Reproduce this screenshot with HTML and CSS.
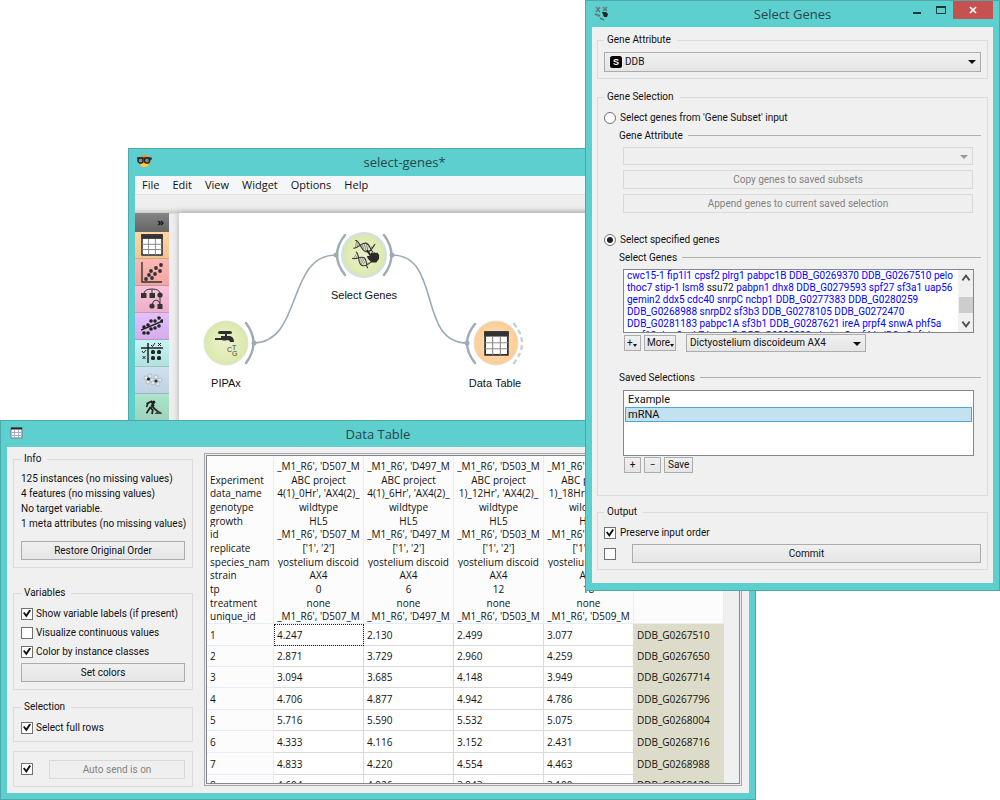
FILE: index.html
```html
<!DOCTYPE html>
<html lang="en">
<head>
<meta charset="utf-8">
<title>Select Genes</title>
<link rel="stylesheet" href="styles.css">
</head>
<body>
<svg class="defs" width="0" height="0" aria-hidden="true">
  <defs>
    <symbol id="grid-icon" viewBox="0 0 22 22">
      <rect x="1" y="1" width="20" height="20" fill="#fff" stroke="#333" stroke-width="1.6"/>
      <rect x="0.3" y="0.3" width="21.4" height="4.6" fill="#333"/>
      <path d="M7.6 5v16M14.4 5v16M1 10.3h20M1 15.6h20" stroke="#8a8a8a" stroke-width="1" fill="none"/>
    </symbol>
    <symbol id="dna" viewBox="0 0 24 12">
      <path d="M1 1C7 1 9 11 15 11S21 4 23 1M1 10C6 10 8 2 13 2S19 9 23 10" fill="none" stroke="#333" stroke-width="1.2"/>
      <path d="M3 2v7M5 3.500v4M10 4v4M12 3v6M14 3v7M16 4v6M20 4v4" stroke="#666" stroke-width="0.7"/>
    </symbol>
    <symbol id="genes-icon" viewBox="0 0 30 32">
      <use href="#dna" x="1" y="1" width="24" height="12" transform="rotate(12 13 7)"/>
      <use href="#dna" x="-1" y="16" width="22" height="11" transform="rotate(32 10 22)"/>
      <path d="M15 11l2-1 3 5 1-2 2 1 1-1 2 1 1-1 2 3 0 4-3 4h-5l-4-4-1-3 3 0z" fill="#2b2b2b"/>
    </symbol>
  </defs>
</svg>
<main class="desktop">

  <section class="window workflow" aria-label="select-genes">
    <header class="titlebar">
      <svg class="title-icon" viewBox="0 0 16 16" aria-hidden="true">
        <circle cx="8.500" cy="8" r="6" fill="#f5941e"/>
        <ellipse cx="8.500" cy="12" rx="4" ry="1.800" fill="#ffd24a"/>
        <path d="M1 5h14M14 7l2-2" stroke="#333" stroke-width="1.400"/>
        <circle cx="4.500" cy="7.500" r="2.600" fill="#7d8b92" stroke="#222" stroke-width="1.300"/>
        <circle cx="11" cy="7.500" r="2.600" fill="#7d8b92" stroke="#222" stroke-width="1.300"/>
      </svg>
      <h1 class="title">select-genes*</h1>
    </header>
    <div class="client">
      <nav class="menubar">
        <button>File</button><button>Edit</button><button>View</button><button>Widget</button><button>Options</button><button>Help</button>
      </nav>
      <div class="workspace">
        <div class="dock">
          <button class="dock-head" aria-label="Expand">»</button>
          <button class="tool data" aria-label="Data"><svg viewBox="0 0 22 22"><use href="#grid-icon"/></svg></button>
          <button class="tool visualize" aria-label="Visualize"><svg viewBox="0 0 22 22"><path d="M1 1v20h20" fill="none" stroke="#333" stroke-width="1.400"/><g fill="#333"><circle cx="5" cy="18" r="1.900"/><circle cx="8" cy="14" r="1.900"/><circle cx="10" cy="10" r="1.900"/><circle cx="11" cy="17" r="1.900"/><circle cx="14" cy="13" r="1.900"/><circle cx="15" cy="7" r="1.900"/><circle cx="19" cy="10" r="1.900"/><circle cx="20" cy="4" r="1.900"/></g></svg></button>
          <button class="tool classify" aria-label="Classify"><svg viewBox="0 0 22 22"><path d="M3 5Q4 1 11 1T19 5M11 1v5M11 17Q12 12 15 12T19 16M19 8v8" fill="none" stroke="#333"/><g fill="#333"><rect x="0" y="5" width="5.500" height="5"/><rect x="8.500" y="5" width="5.500" height="5"/><circle cx="19" cy="7" r="2.600"/><circle cx="11" cy="18" r="2.600"/><rect x="16.500" y="16" width="5" height="5"/></g></svg></button>
          <button class="tool regression" aria-label="Regression"><svg viewBox="0 0 22 22"><path d="M0 15L22 6" stroke="#222" stroke-width="1.500"/><g fill="#222"><circle cx="3" cy="12" r="1.800"/><circle cx="3" cy="18" r="1.800"/><circle cx="7" cy="10" r="1.800"/><circle cx="7" cy="18" r="1.800"/><circle cx="10" cy="14" r="1.800"/><circle cx="10" cy="6" r="1.800"/><circle cx="14" cy="13" r="1.800"/><circle cx="14" cy="6" r="1.800"/><circle cx="18" cy="11" r="1.800"/><circle cx="18" cy="3" r="1.800"/><circle cx="21" cy="6" r="1.800"/></g></svg></button>
          <button class="tool evaluate" aria-label="Evaluate"><svg viewBox="0 0 22 22"><path d="M0 6h22M7 1v20" stroke="#222" stroke-width="1.500"/><path d="M10 3l1.500 1.500L14 1M17 1l3 3M20 1l-3 3M1 9l1.500 2L5 8M1.500 14l3 3M4.500 14l-3 3" stroke="#222" fill="none"/><g fill="#222"><rect x="10" y="8" width="4" height="4" rx="1.500"/><rect x="16" y="8" width="4" height="4" rx="1.500"/><rect x="10" y="14" width="4" height="4" rx="1.500"/><rect x="16" y="14" width="4" height="4" rx="1.500"/></g></svg></button>
          <button class="tool unsupervised" aria-label="Unsupervised"><svg viewBox="0 0 22 22"><g fill="#e4eaef" stroke="#a3abb1" stroke-width="0.700"><circle cx="5" cy="9" r="2"/><circle cx="9" cy="7" r="2"/><circle cx="7" cy="13" r="2"/><circle cx="11" cy="11" r="2"/><circle cx="15" cy="8" r="2"/><circle cx="19" cy="11" r="2"/><circle cx="17" cy="15" r="2"/><circle cx="12" cy="14" r="2"/></g><circle cx="7.500" cy="10" r="1.600" fill="#222"/><circle cx="15" cy="12" r="1.600" fill="#333"/></svg></button>
          <button class="tool bio" aria-label="Bioinformatics"><svg viewBox="-1 0 28 28"><circle cx="15" cy="8" r="2.200" fill="#222"/><path d="M6 10l6-3 3 5-4 3 3 3-1 5M11 14l-5 8M12 11l4 5 6 5M8 9l-2 5" stroke="#222" stroke-width="2.200" fill="none"/><path d="M16 23l4-4 4 1 2 3z" fill="#444"/></svg></button>
        </div>
        <div class="canvas">
          <svg viewBox="0 0 495 260" width="495" height="260" role="img" aria-label="PIPAx to Select Genes to Data Table">
            <defs>
              <radialGradient id="green"><stop offset="0" stop-color="#e9edcb"/><stop offset="0.600" stop-color="#e2edb8"/><stop offset="1" stop-color="#d9e8ac"/></radialGradient>
              <radialGradient id="orange"><stop offset="0" stop-color="#ffe6cb"/><stop offset="1" stop-color="#ffcb91"/></radialGradient>
            </defs>
            <g fill="none" stroke="#9cacb4" stroke-linecap="round">
              <path d="M74 130C124 130 107 42 157 42M213 42C263 42 238 130 288 130" stroke-width="1.600"/>
              <path d="M67 110Q82 130 67 150M166 22Q150 42 166 62M205 22Q220 42 205 62M296 111Q280 130 296 150" stroke-width="2.400"/>
              <path d="M335 111Q351 130 335 150" stroke="#c5d0d5" stroke-width="2.400" stroke-dasharray="3 5"/>
            </g>
            <g fill="#9cacb4"><circle cx="75" cy="130" r="2.500"/><circle cx="157" cy="42" r="2.500"/><circle cx="213" cy="42" r="2.500"/><circle cx="288" cy="130" r="2.500"/></g>
            <g stroke="#dfe4d8"><circle cx="47" cy="130" r="22" fill="url(#green)"/><circle cx="185" cy="42" r="22" fill="url(#green)" stroke="#d3deea" stroke-width="2"/><circle cx="317" cy="130" r="22" fill="url(#orange)"/></g>
            <g fill="#2e2e2e"><path d="M36 125h6v-2h4v-2h-5q-2 0-2-1.500t2-1.500h10q2 0 2 1.500T51 121h-3v2h3q4 1 4 6h-4q0-2-3-2-2 1-5 0h-7z"/></g>
            <g class="base"><text x="48" y="139">C</text><text x="53" y="137">T</text><text x="53" y="143">G</text></g>
            <use href="#genes-icon" x="173" y="27" width="28" height="30"/>
            <use href="#grid-icon" x="305" y="118" width="25" height="25"/>
            <g class="node-label"><text x="47" y="174">PIPAx</text><text x="185" y="86">Select Genes</text><text x="316" y="174">Data Table</text></g>
          </svg>
        </div>
      </div>
    </div>
  </section>

  <section class="window datatable" aria-label="Data Table">
    <header class="titlebar">
      <svg class="title-icon" viewBox="0 0 16 16" aria-hidden="true"><rect x="3" y="3" width="11" height="10" fill="#fff" stroke="#6a7f80"/><path d="M3 3.500h11" stroke="#222" stroke-width="2"/><path d="M6.500 5v8M10.500 5v8M3 7.500h11M3 10.500h11" stroke="#aac"/></svg>
      <h1 class="title">Data Table</h1>
    </header>
    <div class="client split">
      <form class="sidebar">
        <fieldset class="info">
          <legend>Info</legend>
          <p>125 instances (no missing values)</p>
          <p>4 features (no missing values)</p>
          <p>No target variable.</p>
          <p>1 meta attributes (no missing values)</p>
          <button type="button" class="push">Restore Original Order</button>
        </fieldset>
        <fieldset class="variables">
          <legend>Variables</legend>
          <label class="option"><input type="checkbox" checked>Show variable labels (if present)</label>
          <label class="option"><input type="checkbox">Visualize continuous values</label>
          <label class="option"><input type="checkbox" checked>Color by instance classes</label>
          <button type="button" class="push">Set colors</button>
        </fieldset>
        <fieldset class="selection">
          <legend>Selection</legend>
          <label class="option"><input type="checkbox" checked>Select full rows</label>
        </fieldset>
        <div class="box auto">
          <input type="checkbox" checked aria-label="Auto send">
          <button type="button" class="push" disabled>Auto send is on</button>
        </div>
      </form>
      <div class="frame">
        <div class="view">
          <table>
            <colgroup><col class="col-key"><col><col><col><col><col></colgroup>
            <thead>
              <tr>
                <th scope="col"><div class="stack keys"><span></span><span>Experiment</span><span>data_name</span><span>genotype</span><span>growth</span><span>id</span><span>replicate</span><span>species_nam</span><span>strain</span><span>tp</span><span>treatment</span><span>unique_id</span></div></th>
                <th scope="col"><div class="stack"><span>_M1_R6', 'D507_M</span><span>ABC project</span><span>4(1)_0Hr', 'AX4(2)_</span><span>wildtype</span><span>HL5</span><span>_M1_R6', 'D507_M</span><span>['1', '2']</span><span>yostelium discoid</span><span>AX4</span><span>0</span><span>none</span><span>_M1_R6', 'D507_M</span></div></th>
                <th scope="col"><div class="stack"><span>_M1_R6', 'D497_M</span><span>ABC project</span><span>4(1)_6Hr', 'AX4(2)_</span><span>wildtype</span><span>HL5</span><span>_M1_R6', 'D497_M</span><span>['1', '2']</span><span>yostelium discoid</span><span>AX4</span><span>6</span><span>none</span><span>_M1_R6', 'D497_M</span></div></th>
                <th scope="col"><div class="stack"><span>_M1_R6', 'D503_M</span><span>ABC project</span><span>1)_12Hr', 'AX4(2)_</span><span>wildtype</span><span>HL5</span><span>_M1_R6', 'D503_M</span><span>['1', '2']</span><span>yostelium discoid</span><span>AX4</span><span>12</span><span>none</span><span>_M1_R6', 'D503_M</span></div></th>
                <th scope="col"><div class="stack"><span>_M1_R6', 'D509_M</span><span>ABC project</span><span>1)_18Hr', 'AX4(2)_</span><span>wildtype</span><span>HL5</span><span>_M1_R6', 'D509_M</span><span>['1', '2']</span><span>yostelium discoid</span><span>AX4</span><span>18</span><span>none</span><span>_M1_R6', 'D509_M</span></div></th>
                <th scope="col"></th>
              </tr>
            </thead>
            <tbody>
              <tr><th scope="row">1</th><td class="current">4.247</td><td>2.130</td><td>2.499</td><td>3.077</td><td class="meta">DDB_G0267510</td></tr>
              <tr><th scope="row">2</th><td>2.871</td><td>3.729</td><td>2.960</td><td>4.259</td><td class="meta">DDB_G0267650</td></tr>
              <tr><th scope="row">3</th><td>3.094</td><td>3.685</td><td>4.148</td><td>3.949</td><td class="meta">DDB_G0267714</td></tr>
              <tr><th scope="row">4</th><td>4.706</td><td>4.877</td><td>4.942</td><td>4.786</td><td class="meta">DDB_G0267796</td></tr>
              <tr><th scope="row">5</th><td>5.716</td><td>5.590</td><td>5.532</td><td>5.075</td><td class="meta">DDB_G0268004</td></tr>
              <tr><th scope="row">6</th><td>4.333</td><td>4.116</td><td>3.152</td><td>2.431</td><td class="meta">DDB_G0268716</td></tr>
              <tr><th scope="row">7</th><td>4.833</td><td>4.220</td><td>4.554</td><td>4.463</td><td class="meta">DDB_G0268988</td></tr>
              <tr><th scope="row">8</th><td>4.604</td><td>4.926</td><td>3.943</td><td>3.100</td><td class="meta">DDB_G0269120</td></tr>
            </tbody>
          </table>
          <div class="scrollbar"><svg viewBox="0 0 10 10"><path d="M2 3.500l3 3 3-3" /></svg></div>
        </div>
      </div>
    </div>
  </section>

  <section class="window genes" aria-label="Select Genes">
    <header class="titlebar">
      <svg class="title-icon" viewBox="0 0 16 16" aria-hidden="true"><path d="M3 2l4 5M7 2L3 7M10 2l4 4M14 2l-4 4M2 9l5 2M7 13l4 2" stroke="#50777a" stroke-width="1.400"/><path d="M3 3h4M10 3h4M3 6h3M3 10l3 2" stroke="#7d8f90"/><path d="M9 7l4 0 2 2-1 3h-3z" fill="#222"/></svg>
      <h1 class="title">Select Genes</h1>
      <div class="controls">
        <button aria-label="Minimize"><svg viewBox="0 0 10 10"><path d="M1 8h8" stroke-width="2"/></svg></button>
        <button aria-label="Maximize"><svg viewBox="0 0 10 10"><path d="M0.500 2h9v6.500h-9z"/><path d="M0 2h10" stroke-width="2"/></svg></button>
        <button class="close" aria-label="Close"><svg viewBox="0 0 10 10"><path d="M2 2l6 6M8 2l-6 6" stroke-width="1.700"/></svg></button>
      </div>
    </header>
    <form class="client form">
      <fieldset>
        <legend>Gene Attribute</legend>
        <div class="combo-wrap">
          <svg class="tag" viewBox="0 0 12 12" aria-hidden="true"><rect width="12" height="12" rx="2.500"/><text x="3" y="9">S</text></svg>
          <select class="combo tagged" aria-label="Gene Attribute"><option>DDB</option></select>
        </div>
      </fieldset>
      <fieldset class="gene-selection">
        <legend>Gene Selection</legend>
        <label class="option"><input type="radio" name="source">Select genes from 'Gene Subset' input</label>
        <div class="group">
          <h2 class="rule">Gene Attribute</h2>
          <div class="stackbox">
            <div class="combo-wrap off"><select class="combo" disabled aria-label="Subset gene attribute"><option></option></select></div>
            <button type="button" class="push" disabled>Copy genes to saved subsets</button>
            <button type="button" class="push" disabled>Append genes to current saved selection</button>
          </div>
        </div>
        <label class="option specified"><input type="radio" name="source" checked>Select specified genes</label>
        <div class="group">
          <h2 class="rule">Select Genes</h2>
          <div class="editor">
            <div class="gene-text" role="textbox" aria-multiline="true" aria-label="Genes" contenteditable="true" spellcheck="false">cwc15-1 fip1l1 cpsf2 plrg1 pabpc1B DDB_G0269370 DDB_G0267510 pelo<br>thoc7 stip-1 lsm8 <span>ssu72</span> pabpn1 dhx8 DDB_G0279593 spf27 sf3a1 uap56<br>gemin2 ddx5 cdc40 snrpC ncbp1 DDB_G0277383 DDB_G0280259<br>DDB_G0268988 snrpD2 sf3b3 DDB_G0278105 DDB_G0272470<br>DDB_G0281183 pabpc1A sf3b1 DDB_G0287621 ireA prpf4 snwA phf5a<br>prpf19 rbm8 crk7 hnrnpD DDB_G0288839 phatrn <span>2</span> rnf4 hylD2 n2 rftd</div>
            <div class="mini-scroll"><svg viewBox="0 0 10 10"><path d="M2 7l3-4 3 4"/></svg><i></i><svg viewBox="0 0 10 10"><path d="M2 3l3 4 3-4"/></svg></div>
          </div>
          <div class="actions">
            <button type="button" class="small menu" aria-label="Add">+</button>
            <button type="button" class="small menu">More</button>
            <div class="combo-wrap organism"><select class="combo" aria-label="Organism"><option>Dictyostelium discoideum AX4</option></select></div>
          </div>
        </div>
        <div class="group saved">
          <h2 class="rule">Saved Selections</h2>
          <ul class="list" role="listbox" aria-label="Saved Selections"><li role="option">Example</li><li role="option" aria-selected="true">mRNA</li></ul>
          <div class="actions">
            <button type="button" class="small" aria-label="Add selection">+</button>
            <button type="button" class="small" aria-label="Remove selection">−</button>
            <button type="button" class="small">Save</button>
          </div>
        </div>
      </fieldset>
      <fieldset class="output">
        <legend>Output</legend>
        <label class="option"><input type="checkbox" checked>Preserve input order</label>
        <div class="commit"><input type="checkbox" aria-label="Commit automatically"><button type="button" class="push">Commit</button></div>
      </fieldset>
    </form>
  </section>
</main>
</body>
</html>
```
FILE: styles.css
```css
:root {
  --ui: Roboto, "Liberation Sans", sans-serif;
  --segoe: "Open Sans", "Noto Sans", sans-serif;
  --teal: #5dcfcf;
  --teal-dark: #4ba9a9;
  --face: #f0f0f0;
}
* { box-sizing: border-box; }
body { margin: 0; background: #fff; color: #111; font: 10px/12px var(--ui); }
h1, h2, p, ul { margin: 0; padding: 0; font: inherit; }
button, input, select { margin: 0; font: inherit; color: inherit; }
.defs { position: absolute; }

.desktop { position: relative; min-height: 100vh; overflow: hidden; }
.window {
  position: absolute; display: flex; flex-direction: column;
  padding: 0 6px 6px; background: var(--teal); border: 1px solid var(--teal-dark);
}
.workflow { left: 12.8%; top: 148px; width: 55.3%; }
.datatable { left: 0; top: 420px; width: 75.6%; }
.genes { left: 58.5%; right: 0; top: 0; padding-bottom: 7px; }
.titlebar { position: relative; display: flex; align-items: center; height: 26px; }
.workflow .titlebar { height: 27px; }
.title { flex: 1; text-align: center; font: 13px/18px var(--segoe); color: #27474a; padding-bottom: 1px; }
.title-icon { position: absolute; left: 1px; top: 4px; width: 16px; height: 16px; }
.client { background: var(--face); }

/* Window buttons */
.controls { position: absolute; right: 0; top: 0; display: flex; align-items: flex-start; }
.controls button { width: 24px; height: 18px; padding: 0; border: 0; background: none; display: grid; place-items: center; }
.controls svg { width: 10px; height: 10px; fill: none; stroke: #1d3638; }
.controls .close { width: 40px; background: #c75050; }
.controls .close svg { stroke: #fff; }

/* Workflow window */
.menubar { display: flex; gap: 13px; height: 19px; padding-left: 7px; background: #f5f6f7; border-bottom: 1px solid #e3e3e3; }
.menubar button { padding: 0; border: 0; background: none; font: 11px/18px var(--segoe); }
.workspace { display: flex; gap: 10px; padding-top: 18px; background: linear-gradient(#f0f0f0, #ececec 13px, #ccc 18px, #eee 19px); }
.dock { width: 34px; display: flex; flex-direction: column; }
.dock button { width: 100%; border: 0; padding: 0; border-bottom: 1px solid #0003; }
.dock .dock-head { height: 19px; padding-right: 5px; text-align: right; background: linear-gradient(#858585, #666); font: bold 11px/16px var(--segoe); }
.tool { height: 27px; display: grid; place-items: center; }
.tool svg { width: 22px; height: 22px; }
.data { background: linear-gradient(#ffd6a4, #f0c591); }
.visualize { background: linear-gradient(#ffb8b5, #f0a6a3); }
.classify { background: linear-gradient(#fac3dc, #edafcb); }
.regression { background: linear-gradient(#e5bffb, #d2aeea); }
.evaluate { background: linear-gradient(#c5f5f3, #b2e2e0); }
.unsupervised { background: linear-gradient(#cfe1f0, #bfd2e2); }
.bio { background: linear-gradient(#ace5cc, #9dd3ba); }
.canvas { flex: 1; overflow: hidden; background: #fff; box-shadow: 0 0 6px #aaa; }
.canvas svg { display: block; }
.node-label { font: 11px "Liberation Sans", sans-serif; text-anchor: middle; fill: #111; }
.base { font: 7px "Liberation Sans", sans-serif; fill: #444; }

/* Group boxes and controls */
fieldset, .box { min-width: 0; margin: 0; border: 1px solid #dcdcdc; }
fieldset { padding: 0 7px 7px; }
legend { padding: 0 6px 0 3px; line-height: 12px; }
.push {
  display: block; width: 100%; height: 19px; padding: 0; text-align: center; line-height: 17px;
  border: 1px solid #acacac; background: linear-gradient(#f0f0f0, #e5e5e5);
}
.push:disabled { color: #838383; background: #efefef; border-color: #d9d9d9; }
.option { display: flex; align-items: center; gap: 3px; height: 19px; }
input[type="checkbox"], input[type="radio"] {
  appearance: none; flex: none; width: 12px; height: 12px; background: #fff; border: 1px solid #707070;
  display: grid; place-items: center;
}
input[type="radio"] { border-radius: 50%; }
input[type="checkbox"]:checked::before {
  content: ""; width: 8px; height: 8px; background: #111;
  clip-path: polygon(0 45%, 18% 32%, 40% 58%, 80% 0, 100% 14%, 42% 100%);
}
input[type="radio"]:checked::before { content: ""; width: 6px; height: 6px; border-radius: 50%; background: #222; }

/* Data table window */
.split { display: grid; grid-template-columns: 180px 1fr; gap: 11px; padding: 6px 7px 6px 6px; }
.info { padding-top: 6px; }
.info p { line-height: 15px; white-space: nowrap; }
.info .push { margin-top: 10px; }
.variables { margin-top: 19px; padding-top: 5px; }
.variables .push { margin-top: 2px; }
.selection { margin-top: 11px; padding-top: 5px; padding-bottom: 4px; }
.auto { display: flex; align-items: center; gap: 16px; height: 36px; margin-top: 9px; padding: 0 7px; }
.frame { height: 333px; border: 1px solid #a8a8a8; padding: 1px; background: #eee; }
.view { height: 100%; display: grid; grid-template-columns: 1fr 15px; overflow: hidden; border: 1px solid #828790; background: #fff; }
.view table { width: 100%; height: 0; table-layout: fixed; border-collapse: separate; border-spacing: 0; font: 10px/14px var(--segoe); }
.col-key { width: 67px; }
.view th, .view td { padding: 0 0 0 3px; text-align: left; font-weight: normal; white-space: nowrap; border: solid #d9d9d9; border-width: 0 1px 1px 0; }
.view th { background: #fcfcfc; border-color: #e3eff8; }
.view thead th { height: 168px; padding: 0 3px; vertical-align: bottom; }
.stack { display: grid; grid-auto-rows: 1fr; height: 164px; }
.stack span { display: flex; justify-content: center; align-items: center; overflow: hidden; min-height: 0; }
.stack.keys span { justify-content: flex-start; }
.view tbody tr { height: 22px; }
.view tbody tr:nth-child(3n+2), .view tbody tr:nth-child(3) { height: 21px; }
.view .current { outline: 1px dotted #222; outline-offset: -1px; }
.view .meta { background: #dcdcc8; border-right-color: #dcdcc8; }
.scrollbar { display: flex; align-items: flex-end; justify-content: center; padding-bottom: 2px; background: var(--face); }
.scrollbar svg, .mini-scroll svg { width: 12px; height: 12px; fill: none; stroke: #505050; stroke-width: 1.5px; }

/* Select genes window */
.form { padding: 6px 5px 13px; border-top: 1px solid #dff; }
.form fieldset { padding: 6px; }
.combo-wrap { position: relative; height: 20px; }
.combo {
  appearance: none; display: block; width: 100%; height: 100%; padding: 0 16px 0 3px; border: 1px solid #acacac; border-radius: 0;
  background: linear-gradient(#f0f0f0, #e5e5e5);
}
.combo:disabled { background: #efefef; border-color: #d9d9d9; opacity: 1; }
.combo.tagged { padding-left: 20px; }
.combo-wrap::after { content: ""; position: absolute; right: 5px; top: 8px; border: solid transparent; border-top-color: #111; border-width: 4px 4px 0; }
.combo-wrap.off::after { border-top-color: #999; }
.tag { position: absolute; left: 6px; top: 4px; width: 12px; height: 12px; }
.tag text { font: bold 9px "Liberation Sans", sans-serif; fill: #fff; }
.form .gene-selection { margin-top: 12px; padding-bottom: 22px; }
.form .option { gap: 4px; height: 18px; }
.group { padding-left: 15px; }
.rule { display: flex; align-items: center; gap: 5px; height: 17px; }
.rule::after { content: ""; flex: 1; height: 1px; background: #b0b0b0; }
.stackbox { display: grid; gap: 5px; padding: 3px 8px 0 4px; }
.stackbox .combo-wrap { height: 18px; }
.form .specified { margin-top: 18px; }
.editor { display: flex; height: 64px; margin: 3px 7px 0 4px; overflow: hidden; background: #fff; border: 1px solid #828790; }
.gene-text { flex: 1; min-width: 0; padding: 0 3px; overflow: hidden; white-space: nowrap; color: #00f; font: 10px/12px var(--ui); outline: 0; }
.gene-text span { color: #111; }
.mini-scroll { width: 15px; display: flex; flex-direction: column; align-items: center; justify-content: space-between; padding: 2px 0; background: var(--face); }
.mini-scroll i { width: 14px; height: 16px; margin-top: 8px; background: #cdcdcd; }
.actions { display: flex; align-items: center; gap: 3px; padding: 1px 0 0 5px; }
.small { height: 16px; min-width: 17px; padding: 0 3px; line-height: 14px; border: 1px solid #acacac; background: linear-gradient(#f0f0f0, #e5e5e5); }
.small.menu { display: flex; align-items: center; padding: 0 1px 0 2px; }
.menu::after { content: ""; align-self: flex-end; margin-bottom: 3px; border: solid transparent; border-top-color: #111; border-width: 3px 2px 0; }
.organism { width: 180px; height: 18px; margin-left: 7px; }
.saved { margin-top: 17px; }
.list { height: 66px; margin: 4px 7px 0 4px; padding: 1px; list-style: none; background: #fff; border: 1px solid #828790; font: 11px/15px var(--ui); }
.list li { padding: 0 3px; height: 15px; }
.list li[aria-selected] { line-height: 13px; border: 1px solid #4aa8dc; background: #c4e1ef; padding: 0 2px; }
.output { margin-top: 10px; }
.commit { display: flex; align-items: center; gap: 16px; margin-top: 2px; }
```
